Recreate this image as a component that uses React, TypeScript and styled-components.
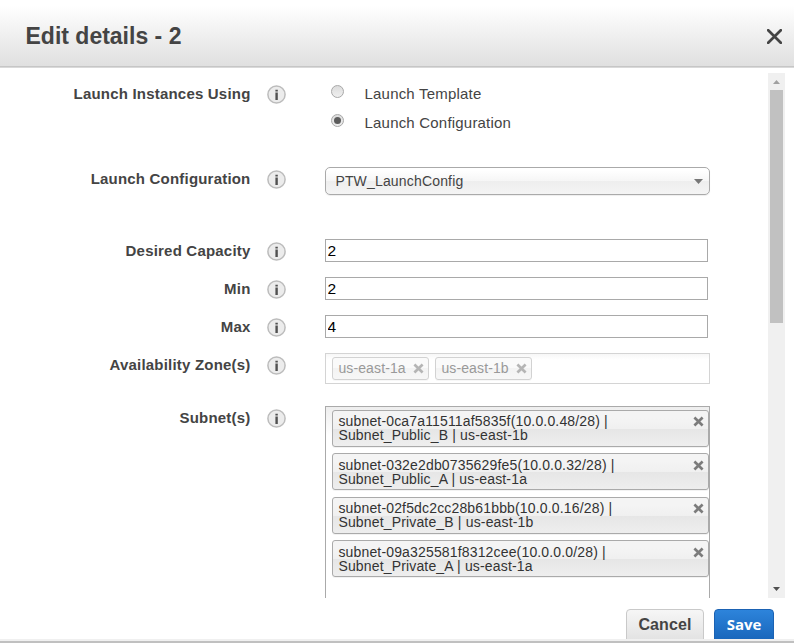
import React from "react";
import styled, { createGlobalStyle, css } from "styled-components";

const Global = createGlobalStyle`
  *, *::before, *::after { box-sizing: border-box; }
  body { margin: 0; background: #fff; overflow: hidden; }
  button, input { font-family: inherit; margin: 0; }
`;

const Dialog = styled.div`
  display: flex;
  flex-direction: column;
  width: 794px;
  height: 643px;
  overflow: hidden;
  background: #fff;
  color: #444;
  font-family: "Liberation Sans", Arial, sans-serif;
`;

const Header = styled.header`
  display: flex;
  align-items: center;
  justify-content: space-between;
  flex: 0 0 68px;
  padding: 5px 12px 0 25.5px;
  border-bottom: 1px solid #d9d9d9;
  box-shadow: inset 0 -1px 0 #c6c6c6;
  background: linear-gradient(#fff 8%, #dfdfdf);
`;

const Title = styled.h1`
  margin: 0;
  font-size: 23px;
  line-height: 28px;
  font-weight: bold;
`;

const CloseButton = styled.button`
  display: flex;
  padding: 0;
  border: 0;
  background: none;
`;

const Body = styled.div`
  display: flex;
  flex: 0 0 530px;
  overflow: hidden;
`;

const Form = styled.div`
  flex: 0 0 768px;
  height: 530px;
  padding-top: 14px;
  overflow: hidden;
`;

const Row = styled.div<{ $height: number }>`
  display: grid;
  grid-template-columns: 251px 19px 385px;
  column-gap: 16px;
  height: ${(p) => p.$height}px;
`;

const Label = styled.label`
  padding: 3px 0.5px 0 0;
  text-align: right;
  white-space: nowrap;
  font-size: 15px;
  line-height: 18px;
  font-weight: bold;
  letter-spacing: 0.2px;
`;

const InfoSlot = styled.span`
  display: block;
  height: 19px;
  margin-top: 3px;
`;

const Field = styled.div`
  margin-left: 23px;
  width: 385px;
`;

const RadioOption = styled.div`
  display: flex;
  height: 29px;
  padding: 3px 0 0 6px;
  gap: 20.5px;
  white-space: nowrap;
  font-size: 15px;
  line-height: 18px;
  letter-spacing: 0.2px;
`;

const RadioMark = styled.span<{ $checked?: boolean }>`
  display: flex;
  align-items: center;
  justify-content: center;
  width: 13px;
  height: 13px;
  border: 1px solid #a8a8a8;
  border-radius: 50%;
  background: linear-gradient(#dcdcdc, #efefef);
  &::after {
    content: "";
    width: 7px;
    height: 7px;
    border-radius: 50%;
    background: ${(p) => (p.$checked ? "#5c5c5c" : "transparent")};
  }
`;

const Select = styled.div`
  display: flex;
  align-items: center;
  justify-content: space-between;
  height: 28px;
  padding: 0 6px 0 9.4px;
  border: 1px solid #aaa;
  border-radius: 5px;
  background: linear-gradient(#fff 10%, #f6f6f6 50%, #eee 52%, #f4f4f4);
  box-shadow: 0 1px 1px rgba(0, 0, 0, 0.07);
  font-size: 14px;
  letter-spacing: 0.17px;
`;

const NumberInput = styled.input`
  display: block;
  width: 383px;
  height: 23px;
  padding: 0 1.5px;
  border: 1px solid #a9a9a9;
  border-radius: 0;
  color: #000;
  font-size: 15.5px;
  line-height: 21px;
  outline: 0;
`;

const ZoneBox = styled.div`
  display: flex;
  gap: 6px;
  height: 31px;
  padding: 3px 6px;
  border: 1px solid #d4d4d4;
  background: linear-gradient(#f7f7f7, #fff 20%);
`;

const SubnetBox = styled.div`
  display: flex;
  flex-direction: column;
  gap: 6.4px;
  height: 240px;
  padding: 3px 0 0 6px;
  border: 1px solid #aaa;
  background: linear-gradient(#eee, #fff 12%);
`;

const chipBase = css`
  display: flex;
  justify-content: space-between;
  border: 1px solid #aaa;
  border-radius: 3px;
  font-size: 14px;
  line-height: 14px;
  letter-spacing: 0.16px;
  white-space: pre-line;
`;

const ZoneChip = styled.div`
  ${chipBase}
  width: 97px;
  height: 23px;
  padding: 3px 4.5px 0 5.4px;
  border-color: #d2d2d2;
  background: linear-gradient(#fafafa 45%, #f3f3f3 50%, #f7f7f7);
  box-shadow: 0 1px 0 rgba(0, 0, 0, 0.03);
  color: #999;
  letter-spacing: 0.12px;
`;

const SubnetChip = styled.div`
  ${chipBase}
  flex: 0 0 37px;
  width: 377px;
  padding: 3.4px 4.5px 0 5.4px;
  background: linear-gradient(#f4f4f4 20%, #f0f0f0 50%, #e6e6e6 52%, #eee);
  box-shadow: 0 1px 0 rgba(0, 0, 0, 0.05);
  color: #333;
`;

const ChipRemove = styled.span`
  display: flex;
  margin-top: 2px;
`;

const Scrollbar = styled.div`
  display: flex;
  flex-direction: column;
  align-items: center;
  width: 17px;
  height: 525px;
  margin-top: 5px;
  background: #f0f0f0;
`;

const ScrollArrow = styled.span`
  display: flex;
  width: 17px;
  height: 17px;
`;

const Thumb = styled.span`
  width: 13px;
  height: 233px;
  margin-bottom: auto;
  background: #c1c1c1;
`;

const Footer = styled.footer`
  display: flex;
  justify-content: flex-end;
  gap: 10px;
  flex: 0 0 41px;
  padding: 11px 20px 0 0;
  overflow: hidden;
`;

const Button = styled.button<{ $primary?: boolean }>`
  width: ${(p) => (p.$primary ? 60 : 78)}px;
  height: 34px;
  padding: 0 0 ${(p) => (p.$primary ? 5 : 3)}px;
  border: 1px solid ${(p) => (p.$primary ? "#1b62b3" : "#c9c9c9")};
  border-radius: 4px;
  background: ${(p) =>
    p.$primary ? "linear-gradient(#2d84db, #1764b9)" : "linear-gradient(#f6f6f6, #e1e1e1)"};
  color: ${(p) => (p.$primary ? "#fff" : "#444")};
  font-family: ${(p) => (p.$primary ? '"Open Sans", "Noto Sans", sans-serif' : "inherit")};
  font-size: ${(p) => (p.$primary ? 15 : 16)}px;
  font-weight: bold;
  letter-spacing: ${(p) => (p.$primary ? 0 : 0.1)}px;
`;

const BottomEdge = styled.div`
  flex: 0 0 4px;
  border-top: 2px solid #f0f0f0;
  background: #c0c0c0;
`;

const InfoIcon = () => (
  <InfoSlot>
    <svg width="19" height="19" viewBox="0 0 19 19">
      <circle cx="9.5" cy="9.5" r="8.6" fill="#ececec" stroke="#bcbcbc" strokeWidth="1.5" />
      <path d="M8.4 4.8h2.4v1.8H8.4zM8.4 7.6h2.4v7.4H8.4z" fill="#505050" />
    </svg>
  </InfoSlot>
);

const Cross = ({ color }: { color: string }) => (
  <svg width="11" height="11" viewBox="0 0 11 11">
    <path d="M1.4 1.6L9.6 9.4M9.6 1.6L1.4 9.4" stroke={color} strokeWidth="2.7" />
  </svg>
);

const subnets = [
  "subnet-0ca7a11511af5835f(10.0.0.48/28) |\nSubnet_Public_B | us-east-1b",
  "subnet-032e2db0735629fe5(10.0.0.32/28) |\nSubnet_Public_A | us-east-1a",
  "subnet-02f5dc2cc28b61bbb(10.0.0.16/28) |\nSubnet_Private_B | us-east-1b",
  "subnet-09a325581f8312cee(10.0.0.0/28) |\nSubnet_Private_A | us-east-1a",
];

const FormRow = ({
  label,
  height,
  children,
}: {
  label: string;
  height: number;
  children: React.ReactNode;
}) => (
  <Row $height={height}>
    <Label>{label}</Label>
    <InfoIcon />
    <Field>{children}</Field>
  </Row>
);

export default function App() {
  return (
    <>
      <Global />
      <Dialog>
        <Header>
          <Title>Edit details - 2</Title>
          <CloseButton aria-label="Close">
            <svg width="15" height="15" viewBox="0 0 15 15">
              <path d="M1.2 1.2L13.8 13.8M13.8 1.2L1.2 13.8" stroke="#444" strokeWidth="2.7" strokeLinecap="round" />
            </svg>
          </CloseButton>
        </Header>
        <Body>
          <Form>
            <FormRow label="Launch Instances Using" height={85}>
              <RadioOption>
                <RadioMark />
                Launch Template
              </RadioOption>
              <RadioOption>
                <RadioMark $checked />
                Launch Configuration
              </RadioOption>
            </FormRow>
            <FormRow label="Launch Configuration" height={72}>
              <Select>
                PTW_LaunchConfig
                <svg width="9" height="5" viewBox="0 0 9 5">
                  <path d="M0 0h9L4.5 5z" fill="#777" />
                </svg>
              </Select>
            </FormRow>
            <FormRow label="Desired Capacity" height={38}>
              <NumberInput defaultValue="2" />
            </FormRow>
            <FormRow label="Min" height={38}>
              <NumberInput defaultValue="2" />
            </FormRow>
            <FormRow label="Max" height={38}>
              <NumberInput defaultValue="4" />
            </FormRow>
            <FormRow label="Availability Zone(s)" height={53}>
              <ZoneBox>
                {["us-east-1a", "us-east-1b"].map((zone) => (
                  <ZoneChip key={zone}>
                    {zone}
                    <ChipRemove>
                      <Cross color="#b5b5b5" />
                    </ChipRemove>
                  </ZoneChip>
                ))}
              </ZoneBox>
            </FormRow>
            <FormRow label="Subnet(s)" height={240}>
              <SubnetBox>
                {subnets.map((subnet) => (
                  <SubnetChip key={subnet}>
                    {subnet}
                    <ChipRemove>
                      <Cross color="#7c7c7c" />
                    </ChipRemove>
                  </SubnetChip>
                ))}
              </SubnetBox>
            </FormRow>
          </Form>
          <Scrollbar>
            <ScrollArrow>
              <svg width="17" height="17" viewBox="0 0 17 17">
                <path d="M5 11h7L8.5 7z" fill="#a0a0a0" />
              </svg>
            </ScrollArrow>
            <Thumb />
            <ScrollArrow>
              <svg width="17" height="17" viewBox="0 0 17 17">
                <path d="M5 6h7L8.5 10z" fill="#505050" />
              </svg>
            </ScrollArrow>
          </Scrollbar>
        </Body>
        <Footer>
          <Button>Cancel</Button>
          <Button $primary>Save</Button>
        </Footer>
        <BottomEdge />
      </Dialog>
    </>
  );
}
